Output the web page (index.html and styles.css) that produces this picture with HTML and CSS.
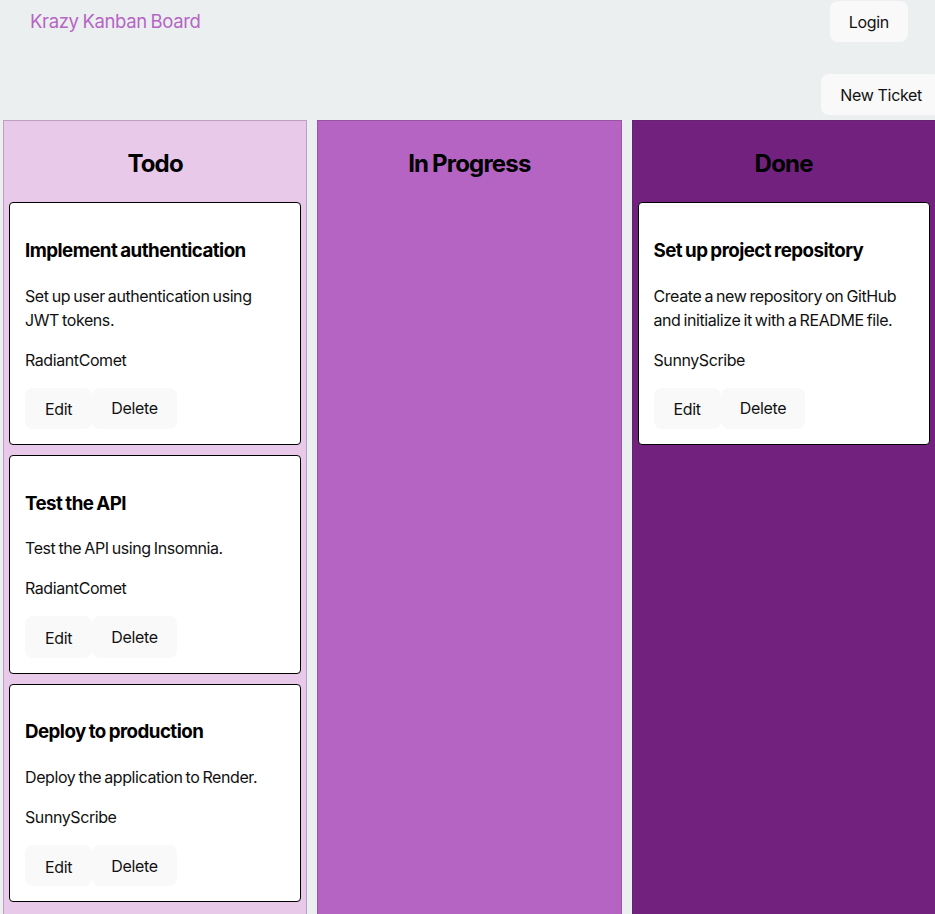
FILE: index.html
```html
<!DOCTYPE html>
<html lang="en">
<head>
<meta charset="utf-8">
<title>Krazy Kanban Board</title>
<link rel="stylesheet" href="styles.css">
</head>
<body>
<header class="nav">
  <h1 class="brand">Krazy Kanban Board</h1>
  <button class="btn">Login</button>
</header>
<div class="toolbar">
  <button class="btn">New Ticket</button>
</div>
<main class="board">
  <section class="column todo">
    <h2 class="column-title">Todo</h2>
    <div class="card">
      <h3 class="card-title">Implement authentication</h3>
      <p>Set up user authentication using JWT tokens.</p>
      <p>RadiantComet</p>
      <div class="actions"><button class="btn btn-edit">Edit</button><button class="btn">Delete</button></div>
    </div>
    <div class="card">
      <h3 class="card-title">Test the API</h3>
      <p>Test the API using Insomnia.</p>
      <p>RadiantComet</p>
      <div class="actions"><button class="btn btn-edit">Edit</button><button class="btn">Delete</button></div>
    </div>
    <div class="card">
      <h3 class="card-title">Deploy to production</h3>
      <p>Deploy the application to Render.</p>
      <p>SunnyScribe</p>
      <div class="actions"><button class="btn btn-edit">Edit</button><button class="btn">Delete</button></div>
    </div>
  </section>
  <section class="column progress">
    <h2 class="column-title">In Progress</h2>
  </section>
  <section class="column done">
    <h2 class="column-title">Done</h2>
    <div class="card">
      <h3 class="card-title">Set up project repository</h3>
      <p>Create a new repository on GitHub and initialize it with a README file.</p>
      <p>SunnyScribe</p>
      <div class="actions"><button class="btn btn-edit">Edit</button><button class="btn">Delete</button></div>
    </div>
  </section>
</main>
</body>
</html>
```
FILE: styles.css
```css
html {
  overflow: hidden;
}
body {
  margin: 0;
  background: #eceff0;
  font-family: Inter, "Liberation Sans", sans-serif;
  line-height: 1.5;
  color: #111;
  letter-spacing: -0.026em;
  word-spacing: -1px;
}
.nav {
  display: flex;
  justify-content: space-between;
  align-items: flex-start;
  padding: 1px 27px 0 30px;
}
.brand {
  margin: 7px 0 0;
  font-size: 18.5px;
  font-weight: 400;
  color: #b565c4;
  line-height: 1.5;
  letter-spacing: -0.02em;
}
.btn {
  font-family: inherit;
  font-size: 16px;
  font-weight: 400;
  letter-spacing: -0.02em;
  color: #111;
  background: #f9f9f9;
  border: 1px solid transparent;
  border-radius: 8px;
  padding: 9.6px 18px;
  cursor: pointer;
}
.toolbar {
  display: flex;
  justify-content: flex-end;
  margin: 32px -6px 0 0;
}
.board {
  display: flex;
  gap: 10px;
  padding: 5px 0 0 3px;
}
.column {
  flex: 0 0 304.25px;
  box-sizing: border-box;
  min-height: 820px;
  padding: 5px;
  border: 1px solid rgba(60, 40, 70, 0.25);
}
.todo { background: #e8c9ea; }
.progress { background: #b564c4; }
.done { background: #72227e; }
.column-title {
  margin: 0.83em 0;
  font-size: 24px;
  font-weight: 700;
  text-align: center;
  color: #000;
  letter-spacing: -0.034em;
}
.card {
  background: #fff;
  border: 1px solid #000;
  border-radius: 4px;
  padding: 15px;
  margin-bottom: 10px;
}
.card-title {
  margin: 18.72px 0;
  font-size: 18.72px;
  font-weight: 700;
  color: #000;
  letter-spacing: -0.028em;
}
.card p {
  margin: 16px 0;
  font-size: 16px;
}
.actions {
  display: flex;
}
.btn-edit {
  padding: 10.5px 19px 8.7px;
}
```
